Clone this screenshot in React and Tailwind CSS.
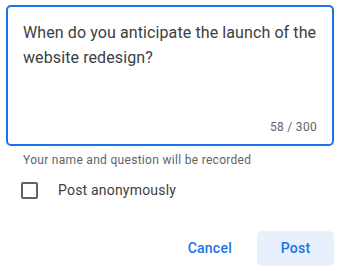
import React, { useState } from "react";

const QUESTION = "When do you anticipate the launch of the website redesign?";

const App = () => {
  const [anon, setAnon] = useState(false);

  return (
    <div
      className="w-[340px] h-[271px] bg-white px-[6px] pt-[5px]"
      style={{ fontFamily: "Roboto, 'Liberation Sans', sans-serif" }}
    >
      <div className="w-[328px] h-[141px] border-2 border-[#1a73e8] rounded-[5px] flex flex-col justify-between pl-[15px] pr-[15px] pt-[13px] pb-[9px]">
        <p className="text-[16px] leading-[25px] text-[#3c4043] tracking-[0.1px]">
          {QUESTION}
        </p>
        <div className="text-right text-[12px] leading-[16px] text-[#5f6368] tracking-[0.3px]">
          {QUESTION.length} / 300
        </div>
      </div>

      <p className="mt-[6px] pl-[17px] text-[12px] leading-[16px] text-[#5f6368] tracking-[0.3px]">
        Your name and question will be recorded
      </p>

      <label className="mt-[13px] ml-[15px] flex items-center h-[18px] cursor-pointer">
        <button
          type="button"
          onClick={() => setAnon(!anon)}
          className="w-[17px] h-[17px] border-2 border-[#5f6368] rounded-[2px] shrink-0"
        />
        <span className="ml-[20px] text-[14px] leading-[20px] text-[#3c4043] tracking-[0.2px]">
          Post anonymously
        </span>
      </label>

      <div className="mt-[32px] flex justify-end items-center gap-[1px]">
        <button
          type="button"
          className="h-[35px] px-6 rounded-[4px] text-[14px] font-medium text-[#1a73e8] tracking-[0.25px]"
        >
          Cancel
        </button>
        <button
          type="button"
          className="h-[35px] w-[77px] rounded-[5px] bg-[#e8f0fe] text-[14px] font-medium text-[#1a73e8] tracking-[0.25px]"
        >
          Post
        </button>
      </div>
    </div>
  );
};

export default App;
